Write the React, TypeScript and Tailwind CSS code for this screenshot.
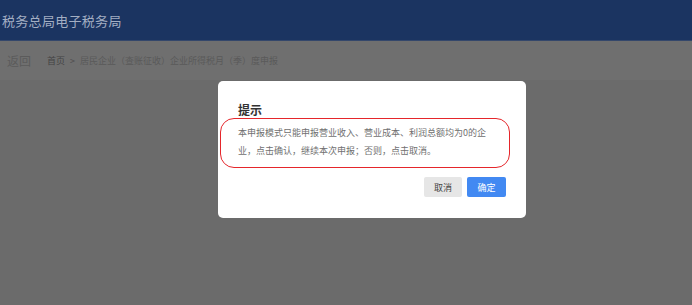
const FONT = { fontFamily: '"Noto Sans CJK SC", "Noto Sans", sans-serif' };

export default function App() {
    return (
        <div
            className="relative w-[692px] h-[305px] overflow-hidden bg-[#6b6b6b] flex flex-col"
            style={FONT}
        >
            {/* 顶部标题栏（被遮罩压暗） */}
            <div className="h-[41px] bg-[#1b3461] border-b border-[#34476b] flex items-center pl-[2px]">
                <span className="text-[13px] leading-none text-[#a3aec3] tracking-[0.3px]">
                    税务总局电子税务局
                </span>
            </div>

            {/* 面包屑 */}
            <div className="h-[39px] bg-[#6f6f6f] flex items-center pl-[7px]">
                <span className="text-[12px] leading-none text-[#5b5b5b]">返回</span>
                <span className="ml-[16px] text-[9px] leading-none text-[#444]">首页</span>
                <span className="mx-[5px] text-[9px] leading-none text-[#4d4d4d]">&gt;</span>
                <span className="text-[9px] leading-none text-[#5a5a5a]">
                    居民企业（查账征收）企业所得税月（季）度申报
                </span>
            </div>

            <div className="flex-1" />

            {/* 提示弹窗 */}
            <div className="absolute left-[218px] top-[81px] w-[308px] h-[137px] bg-white rounded-[5px] flex flex-col pt-[20px] px-[20px]">
                <h2 className="text-[12px] leading-[18px] font-semibold text-[#333]">提示</h2>
                <p className="mt-[5px] w-[252px] text-[9px] leading-[18px] text-[#707070]">
                    本申报模式只能申报营业收入、营业成本、利润总额均为0的企业，点击确认，继续本次申报；否则，点击取消。
                </p>
                <div className="mt-[17px] flex justify-end gap-[5px]">
                    <button className="w-[38px] h-[20px] rounded-[2px] bg-[#e6e6e6] text-[9px] text-[#444] leading-none">
                        取消
                    </button>
                    <button className="w-[39px] h-[20px] rounded-[2px] bg-[#4289f2] text-[9px] text-white leading-none">
                        确定
                    </button>
                </div>

                {/* 红色标注框 */}
                <div className="absolute left-[2px] top-[37px] w-[290px] h-[50px] border-[1.5px] border-[#e5262b] rounded-[14px]" />
            </div>
        </div>
    );
}
